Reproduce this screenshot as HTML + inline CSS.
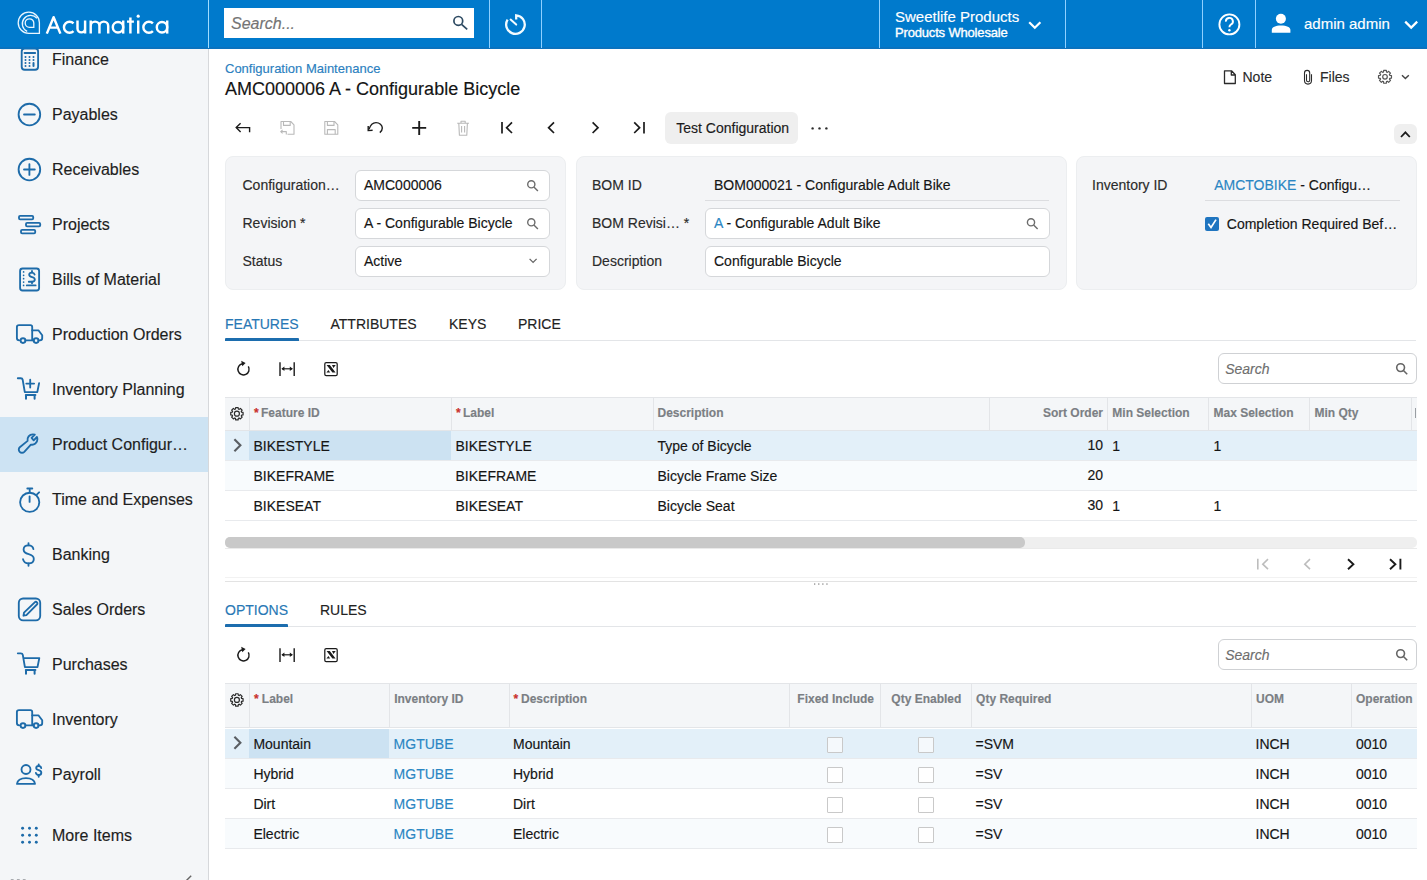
<!DOCTYPE html>
<html><head><meta charset="utf-8"><title>Configuration Maintenance</title><style>
*{box-sizing:border-box}
html,body{margin:0;padding:0}
body{-webkit-text-stroke:0.15px currentColor;width:1427px;height:880px;overflow:hidden;position:relative;background:#fff;font-family:"Liberation Sans",sans-serif;color:#1b1b1b}
.a{position:absolute}
.t{position:absolute;white-space:nowrap;line-height:1}
svg.ov{position:absolute;left:0;top:0;width:1427px;height:880px;overflow:visible}
</style></head><body>
<div class="a" style="left:0px;top:0px;width:1427px;height:49px;background:#007acc"></div>
<div class="a" style="left:0px;top:47px;width:1427px;height:2px;background:#0a72be"></div>
<div class="a" style="left:208px;top:0px;width:1px;height:48px;background:#9fdcff"></div>
<div class="a" style="left:489px;top:0px;width:1px;height:48px;background:#8fd0ff"></div>
<div class="a" style="left:541px;top:0px;width:1px;height:48px;background:#8fd0ff"></div>
<div class="a" style="left:879px;top:0px;width:1px;height:48px;background:#8fd0ff"></div>
<div class="a" style="left:1065px;top:0px;width:1px;height:48px;background:#8fd0ff"></div>
<div class="a" style="left:1202px;top:0px;width:1px;height:48px;background:#8fd0ff"></div>
<div class="a" style="left:1255px;top:0px;width:1px;height:48px;background:#8fd0ff"></div>
<div class="a" style="left:224px;top:8px;width:250px;height:30px;background:#fff"></div>
<div class="t" style="left:231px;top:15.76px;font-size:16px;color:#747474;font-weight:400;font-style:italic;">Search...</div>
<div class="t" style="left:895px;top:8.90px;font-size:15px;color:#fff;font-weight:400;">Sweetlife Products</div>
<div class="t" style="left:895px;top:25.60px;font-size:13px;color:#fff;font-weight:400;letter-spacing:-0.17px;-webkit-text-stroke:0.35px #fff">Products Wholesale</div>
<div class="t" style="left:1304px;top:15.90px;font-size:15px;color:#fff;font-weight:400;">admin admin</div>
<div class="a" style="left:0px;top:49px;width:208px;height:831px;background:#f4f6f8"></div>
<div class="a" style="left:208px;top:49px;width:1px;height:831px;background:#d6d8db"></div>
<div class="a" style="left:0px;top:417px;width:208px;height:55px;background:#cde3f3"></div>
<div class="t" style="left:52px;top:51.76px;font-size:16px;color:#1e1e1e;font-weight:400;">Finance</div>
<div class="t" style="left:52px;top:106.76px;font-size:16px;color:#1e1e1e;font-weight:400;">Payables</div>
<div class="t" style="left:52px;top:161.76px;font-size:16px;color:#1e1e1e;font-weight:400;">Receivables</div>
<div class="t" style="left:52px;top:216.76px;font-size:16px;color:#1e1e1e;font-weight:400;">Projects</div>
<div class="t" style="left:52px;top:271.76px;font-size:16px;color:#1e1e1e;font-weight:400;">Bills of Material</div>
<div class="t" style="left:52px;top:326.76px;font-size:16px;color:#1e1e1e;font-weight:400;">Production Orders</div>
<div class="t" style="left:52px;top:381.76px;font-size:16px;color:#1e1e1e;font-weight:400;">Inventory Planning</div>
<div class="t" style="left:52px;top:436.76px;font-size:16px;color:#1e1e1e;font-weight:400;">Product Configur…</div>
<div class="t" style="left:52px;top:491.76px;font-size:16px;color:#1e1e1e;font-weight:400;">Time and Expenses</div>
<div class="t" style="left:52px;top:546.76px;font-size:16px;color:#1e1e1e;font-weight:400;">Banking</div>
<div class="t" style="left:52px;top:601.76px;font-size:16px;color:#1e1e1e;font-weight:400;">Sales Orders</div>
<div class="t" style="left:52px;top:656.76px;font-size:16px;color:#1e1e1e;font-weight:400;">Purchases</div>
<div class="t" style="left:52px;top:711.76px;font-size:16px;color:#1e1e1e;font-weight:400;">Inventory</div>
<div class="t" style="left:52px;top:766.76px;font-size:16px;color:#1e1e1e;font-weight:400;">Payroll</div>
<div class="t" style="left:52px;top:827.76px;font-size:16px;color:#1e1e1e;font-weight:400;">More Items</div>
<div class="t" style="left:225px;top:61.60px;font-size:13px;color:#2b80c0;font-weight:400;">Configuration Maintenance</div>
<div class="t" style="left:225px;top:79.56px;font-size:18px;color:#141414;font-weight:400;">AMC000006 A - Configurable Bicycle</div>
<div class="t" style="left:1242.5px;top:69.85px;font-size:14px;color:#2b2b2b;font-weight:400;">Note</div>
<div class="t" style="left:1320px;top:69.85px;font-size:14px;color:#2b2b2b;font-weight:400;">Files</div>
<div class="a" style="left:665px;top:112px;width:133px;height:32px;background:#efefef;border-radius:6px"></div>
<div class="t" style="left:676.3px;top:120.75px;font-size:14px;color:#1b1b1b;font-weight:400;">Test Configuration</div>
<div class="a" style="left:1394px;top:124px;width:23px;height:20px;background:#efefef;border-radius:6px"></div>
<div class="a" style="left:225px;top:156px;width:341px;height:134px;background:#f4f5f7;border:1px solid #eceef0;border-radius:8px"></div>
<div class="a" style="left:575.5px;top:156px;width:491px;height:134px;background:#f4f5f7;border:1px solid #eceef0;border-radius:8px"></div>
<div class="a" style="left:1075.5px;top:156px;width:341px;height:134px;background:#f4f5f7;border:1px solid #eceef0;border-radius:8px"></div>
<div class="t" style="left:242.5px;top:177.95px;font-size:14px;color:#2b2b2b;font-weight:400;">Configuration…</div>
<div class="t" style="left:242.5px;top:215.95px;font-size:14px;color:#2b2b2b;font-weight:400;">Revision *</div>
<div class="t" style="left:242.5px;top:253.95px;font-size:14px;color:#2b2b2b;font-weight:400;">Status</div>
<div class="a" style="left:355px;top:169.5px;width:194.5px;height:31px;background:#fff;border:1px solid #d5d7da;border-radius:6px"></div>
<div class="a" style="left:355px;top:207.5px;width:194.5px;height:31px;background:#fff;border:1px solid #d5d7da;border-radius:6px"></div>
<div class="a" style="left:355px;top:245.5px;width:194.5px;height:31px;background:#fff;border:1px solid #d5d7da;border-radius:6px"></div>
<div class="t" style="left:364px;top:177.95px;font-size:14px;color:#151515;font-weight:400;">AMC000006</div>
<div class="t" style="left:364px;top:215.95px;font-size:14px;color:#151515;font-weight:400;">A - Configurable Bicycle</div>
<div class="t" style="left:364px;top:253.95px;font-size:14px;color:#151515;font-weight:400;">Active</div>
<div class="t" style="left:592px;top:177.95px;font-size:14px;color:#2b2b2b;font-weight:400;">BOM ID</div>
<div class="t" style="left:592px;top:215.95px;font-size:14px;color:#2b2b2b;font-weight:400;">BOM Revisi… *</div>
<div class="t" style="left:592px;top:253.95px;font-size:14px;color:#2b2b2b;font-weight:400;">Description</div>
<div class="t" style="left:714px;top:177.95px;font-size:14px;color:#151515;font-weight:400;">BOM000021 - Configurable Adult Bike</div>
<div class="a" style="left:705px;top:200px;width:344px;height:1px;background:#dcdde0"></div>
<div class="a" style="left:705px;top:207.5px;width:344.5px;height:31px;background:#fff;border:1px solid #d5d7da;border-radius:6px"></div>
<div class="a" style="left:705px;top:245.5px;width:344.5px;height:31px;background:#fff;border:1px solid #d5d7da;border-radius:6px"></div>
<div class="t" style="left:714px;top:215.95px;font-size:14px;color:#151515;font-weight:400;"><span style="color:#2a86c3">A</span> - Configurable Adult Bike</div>
<div class="t" style="left:714px;top:253.95px;font-size:14px;color:#151515;font-weight:400;">Configurable Bicycle</div>
<div class="t" style="left:1092px;top:177.95px;font-size:14px;color:#2b2b2b;font-weight:400;">Inventory ID</div>
<div class="t" style="left:1214.2px;top:177.95px;font-size:14px;color:#151515;font-weight:400;"><span style="color:#2a86c3">AMCTOBIKE</span> - Configu…</div>
<div class="a" style="left:1205px;top:200px;width:195px;height:1px;background:#dcdde0"></div>
<div class="a" style="left:1205px;top:217px;width:14px;height:14px;background:#1f75c0;border-radius:2px"></div>
<div class="t" style="left:1226.8px;top:216.85px;font-size:14px;color:#151515;font-weight:400;">Completion Required Bef…</div>
<div class="t" style="left:225px;top:317.15px;font-size:14px;color:#2878b5;font-weight:400;">FEATURES</div>
<div class="t" style="left:330.5px;top:317.15px;font-size:14px;color:#222;font-weight:400;">ATTRIBUTES</div>
<div class="t" style="left:449px;top:317.15px;font-size:14px;color:#222;font-weight:400;">KEYS</div>
<div class="t" style="left:518px;top:317.15px;font-size:14px;color:#222;font-weight:400;">PRICE</div>
<div class="a" style="left:225px;top:340px;width:1191px;height:1px;background:#e3e5e8"></div>
<div class="a" style="left:225px;top:338px;width:74px;height:3px;background:#1c6dae;border-radius:1px 1px 0 0"></div>
<div class="a" style="left:1217.5px;top:353.3px;width:199px;height:31px;background:#fff;border:1px solid #cfd1d4;border-radius:6px"></div>
<div class="t" style="left:1225.2px;top:361.75px;font-size:14px;color:#6e6e6e;font-weight:400;font-style:italic;">Search</div>
<div class="a" style="left:225px;top:397px;width:1192px;height:34px;background:#f4f6f8"></div>
<div class="a" style="left:225px;top:397px;width:1192px;height:1px;background:#e3e5e8"></div>
<div class="a" style="left:225px;top:430px;width:1192px;height:1px;background:#e3e5e8"></div>
<div class="a" style="left:249px;top:398px;width:1px;height:33px;background:#e3e5e8"></div>
<div class="a" style="left:451px;top:398px;width:1px;height:33px;background:#e3e5e8"></div>
<div class="a" style="left:653px;top:398px;width:1px;height:33px;background:#e3e5e8"></div>
<div class="a" style="left:989px;top:398px;width:1px;height:33px;background:#e3e5e8"></div>
<div class="a" style="left:1107px;top:398px;width:1px;height:33px;background:#e3e5e8"></div>
<div class="a" style="left:1208px;top:398px;width:1px;height:33px;background:#e3e5e8"></div>
<div class="a" style="left:1309px;top:398px;width:1px;height:33px;background:#e3e5e8"></div>
<div class="a" style="left:1411px;top:398px;width:1px;height:33px;background:#e3e5e8"></div>
<div class="t" style="left:254px;top:407.24px;font-size:12px;color:#c9302c;font-weight:700;">*</div>
<div class="t" style="left:261px;top:407.44px;font-size:12px;color:#7b7f84;font-weight:700;">Feature ID</div>
<div class="t" style="left:456px;top:407.24px;font-size:12px;color:#c9302c;font-weight:700;">*</div>
<div class="t" style="left:463px;top:407.44px;font-size:12px;color:#7b7f84;font-weight:700;">Label</div>
<div class="t" style="left:657.5px;top:407.44px;font-size:12px;color:#7b7f84;font-weight:700;">Description</div>
<div class="t" style="right:324px;top:407.44px;font-size:12px;color:#7b7f84;font-weight:700;">Sort Order</div>
<div class="t" style="left:1112.3px;top:407.44px;font-size:12px;color:#7b7f84;font-weight:700;">Min Selection</div>
<div class="t" style="left:1213.5px;top:407.44px;font-size:12px;color:#7b7f84;font-weight:700;">Max Selection</div>
<div class="t" style="left:1314.5px;top:407.44px;font-size:12px;color:#7b7f84;font-weight:700;">Min Qty</div>
<div class="a" style="left:1415px;top:408px;width:1.2px;height:10px;background:#9a9ea3"></div>
<div class="a" style="left:225px;top:431px;width:1192px;height:30px;background:#e3f0f9"></div>
<div class="a" style="left:249px;top:431px;width:202px;height:30px;background:#cce2f2"></div>
<div class="a" style="left:225px;top:460px;width:1192px;height:1px;background:#e8eaed"></div>
<div class="t" style="left:253.5px;top:439.15px;font-size:14px;color:#151515;font-weight:400;">BIKESTYLE</div>
<div class="t" style="left:455.5px;top:439.15px;font-size:14px;color:#151515;font-weight:400;">BIKESTYLE</div>
<div class="t" style="left:657.5px;top:439.15px;font-size:14px;color:#151515;font-weight:400;">Type of Bicycle</div>
<div class="t" style="right:324px;top:438.35px;font-size:14px;color:#151515;font-weight:400;">10</div>
<div class="t" style="left:1112.3px;top:439.15px;font-size:14px;color:#151515;font-weight:400;">1</div>
<div class="t" style="left:1213.5px;top:439.15px;font-size:14px;color:#151515;font-weight:400;">1</div>
<div class="a" style="left:225px;top:461px;width:1192px;height:30px;background:#f8fbfd"></div>
<div class="a" style="left:225px;top:490px;width:1192px;height:1px;background:#e8eaed"></div>
<div class="t" style="left:253.5px;top:469.15px;font-size:14px;color:#151515;font-weight:400;">BIKEFRAME</div>
<div class="t" style="left:455.5px;top:469.15px;font-size:14px;color:#151515;font-weight:400;">BIKEFRAME</div>
<div class="t" style="left:657.5px;top:469.15px;font-size:14px;color:#151515;font-weight:400;">Bicycle Frame Size</div>
<div class="t" style="right:324px;top:468.35px;font-size:14px;color:#151515;font-weight:400;">20</div>
<div class="t" style="left:1112.3px;top:469.15px;font-size:14px;color:#151515;font-weight:400;"></div>
<div class="t" style="left:1213.5px;top:469.15px;font-size:14px;color:#151515;font-weight:400;"></div>
<div class="a" style="left:225px;top:520px;width:1192px;height:1px;background:#e8eaed"></div>
<div class="t" style="left:253.5px;top:499.15px;font-size:14px;color:#151515;font-weight:400;">BIKESEAT</div>
<div class="t" style="left:455.5px;top:499.15px;font-size:14px;color:#151515;font-weight:400;">BIKESEAT</div>
<div class="t" style="left:657.5px;top:499.15px;font-size:14px;color:#151515;font-weight:400;">Bicycle Seat</div>
<div class="t" style="right:324px;top:498.35px;font-size:14px;color:#151515;font-weight:400;">30</div>
<div class="t" style="left:1112.3px;top:499.15px;font-size:14px;color:#151515;font-weight:400;">1</div>
<div class="t" style="left:1213.5px;top:499.15px;font-size:14px;color:#151515;font-weight:400;">1</div>
<div class="a" style="left:225px;top:537px;width:1191.5px;height:10.5px;background:#efefef;border-radius:5px"></div>
<div class="a" style="left:225px;top:537px;width:800px;height:10.5px;background:#c9c9c9;border-radius:5px"></div>
<div class="a" style="left:225px;top:547.5px;width:1191.5px;height:1px;background:#eaeaea"></div>
<div class="a" style="left:225px;top:577px;width:1191.5px;height:1px;background:#f2f2f2"></div>
<div class="a" style="left:225px;top:581px;width:1191.5px;height:1px;background:#e3e3e3"></div>
<div class="t" style="left:225px;top:603.15px;font-size:14px;color:#2878b5;font-weight:400;">OPTIONS</div>
<div class="t" style="left:320px;top:603.15px;font-size:14px;color:#222;font-weight:400;">RULES</div>
<div class="a" style="left:225px;top:626px;width:1191px;height:1px;background:#e3e5e8"></div>
<div class="a" style="left:225px;top:624px;width:63px;height:3px;background:#1c6dae;border-radius:1px 1px 0 0"></div>
<div class="a" style="left:1217.5px;top:639.3px;width:199px;height:31px;background:#fff;border:1px solid #cfd1d4;border-radius:6px"></div>
<div class="t" style="left:1225.2px;top:647.75px;font-size:14px;color:#6e6e6e;font-weight:400;font-style:italic;">Search</div>
<div class="a" style="left:225px;top:683.3px;width:1192px;height:45px;background:#f4f6f8"></div>
<div class="a" style="left:225px;top:683.3px;width:1192px;height:1px;background:#e3e5e8"></div>
<div class="a" style="left:225px;top:727.3px;width:1192px;height:1px;background:#e3e5e8"></div>
<div class="a" style="left:249px;top:684.3px;width:1px;height:44px;background:#e3e5e8"></div>
<div class="a" style="left:389px;top:684.3px;width:1px;height:44px;background:#e3e5e8"></div>
<div class="a" style="left:509px;top:684.3px;width:1px;height:44px;background:#e3e5e8"></div>
<div class="a" style="left:789px;top:684.3px;width:1px;height:44px;background:#e3e5e8"></div>
<div class="a" style="left:880px;top:684.3px;width:1px;height:44px;background:#e3e5e8"></div>
<div class="a" style="left:971px;top:684.3px;width:1px;height:44px;background:#e3e5e8"></div>
<div class="a" style="left:1251px;top:684.3px;width:1px;height:44px;background:#e3e5e8"></div>
<div class="a" style="left:1351px;top:684.3px;width:1px;height:44px;background:#e3e5e8"></div>
<div class="t" style="left:254px;top:692.84px;font-size:12px;color:#c9302c;font-weight:700;">*</div>
<div class="t" style="left:261.8px;top:693.04px;font-size:12px;color:#7b7f84;font-weight:700;">Label</div>
<div class="t" style="left:394.2px;top:693.04px;font-size:12px;color:#7b7f84;font-weight:700;">Inventory ID</div>
<div class="t" style="left:513.5px;top:692.84px;font-size:12px;color:#c9302c;font-weight:700;">*</div>
<div class="t" style="left:521px;top:693.04px;font-size:12px;color:#7b7f84;font-weight:700;">Description</div>
<div class="t" style="left:797.3px;top:693.04px;font-size:12px;color:#7b7f84;font-weight:700;">Fixed Include</div>
<div class="t" style="left:891.3px;top:693.04px;font-size:12px;color:#7b7f84;font-weight:700;">Qty Enabled</div>
<div class="t" style="left:976.1px;top:693.04px;font-size:12px;color:#7b7f84;font-weight:700;">Qty Required</div>
<div class="t" style="left:1256px;top:693.04px;font-size:12px;color:#7b7f84;font-weight:700;">UOM</div>
<div class="t" style="left:1356px;top:693.04px;font-size:12px;color:#7b7f84;font-weight:700;">Operation</div>
<div class="a" style="left:225px;top:728.5px;width:1192px;height:30px;background:#e3f0f9"></div>
<div class="a" style="left:249px;top:728.5px;width:140px;height:30px;background:#cce2f2"></div>
<div class="a" style="left:225px;top:758.0px;width:1192px;height:1px;background:#e8eaed"></div>
<div class="t" style="left:253.4px;top:737.15px;font-size:14px;color:#151515;font-weight:400;">Mountain</div>
<div class="t" style="left:393.6px;top:737.15px;font-size:14px;color:#2a86c3;font-weight:400;">MGTUBE</div>
<div class="t" style="left:513px;top:737.15px;font-size:14px;color:#151515;font-weight:400;">Mountain</div>
<div class="a" style="left:826.5px;top:736.5px;width:16px;height:16px;background:#f5f9fc;border:1px solid #c9c9c9;border-radius:1px"></div>
<div class="a" style="left:917.5px;top:736.5px;width:16px;height:16px;background:#f5f9fc;border:1px solid #c9c9c9;border-radius:1px"></div>
<div class="t" style="left:975.5px;top:737.15px;font-size:14px;color:#151515;font-weight:400;">=SVM</div>
<div class="t" style="left:1255.5px;top:737.15px;font-size:14px;color:#151515;font-weight:400;">INCH</div>
<div class="t" style="left:1356px;top:737.15px;font-size:14px;color:#151515;font-weight:400;">0010</div>
<div class="a" style="left:225px;top:758.5px;width:1192px;height:30px;background:#f8fbfd"></div>
<div class="a" style="left:225px;top:788.0px;width:1192px;height:1px;background:#e8eaed"></div>
<div class="t" style="left:253.4px;top:767.15px;font-size:14px;color:#151515;font-weight:400;">Hybrid</div>
<div class="t" style="left:393.6px;top:767.15px;font-size:14px;color:#2a86c3;font-weight:400;">MGTUBE</div>
<div class="t" style="left:513px;top:767.15px;font-size:14px;color:#151515;font-weight:400;">Hybrid</div>
<div class="a" style="left:826.5px;top:766.5px;width:16px;height:16px;background:#fff;border:1px solid #c9c9c9;border-radius:1px"></div>
<div class="a" style="left:917.5px;top:766.5px;width:16px;height:16px;background:#fff;border:1px solid #c9c9c9;border-radius:1px"></div>
<div class="t" style="left:975.5px;top:767.15px;font-size:14px;color:#151515;font-weight:400;">=SV</div>
<div class="t" style="left:1255.5px;top:767.15px;font-size:14px;color:#151515;font-weight:400;">INCH</div>
<div class="t" style="left:1356px;top:767.15px;font-size:14px;color:#151515;font-weight:400;">0010</div>
<div class="a" style="left:225px;top:818.0px;width:1192px;height:1px;background:#e8eaed"></div>
<div class="t" style="left:253.4px;top:797.15px;font-size:14px;color:#151515;font-weight:400;">Dirt</div>
<div class="t" style="left:393.6px;top:797.15px;font-size:14px;color:#2a86c3;font-weight:400;">MGTUBE</div>
<div class="t" style="left:513px;top:797.15px;font-size:14px;color:#151515;font-weight:400;">Dirt</div>
<div class="a" style="left:826.5px;top:796.5px;width:16px;height:16px;background:#fff;border:1px solid #c9c9c9;border-radius:1px"></div>
<div class="a" style="left:917.5px;top:796.5px;width:16px;height:16px;background:#fff;border:1px solid #c9c9c9;border-radius:1px"></div>
<div class="t" style="left:975.5px;top:797.15px;font-size:14px;color:#151515;font-weight:400;">=SV</div>
<div class="t" style="left:1255.5px;top:797.15px;font-size:14px;color:#151515;font-weight:400;">INCH</div>
<div class="t" style="left:1356px;top:797.15px;font-size:14px;color:#151515;font-weight:400;">0010</div>
<div class="a" style="left:225px;top:818.5px;width:1192px;height:30px;background:#f8fbfd"></div>
<div class="a" style="left:225px;top:848.0px;width:1192px;height:1px;background:#e8eaed"></div>
<div class="t" style="left:253.4px;top:827.15px;font-size:14px;color:#151515;font-weight:400;">Electric</div>
<div class="t" style="left:393.6px;top:827.15px;font-size:14px;color:#2a86c3;font-weight:400;">MGTUBE</div>
<div class="t" style="left:513px;top:827.15px;font-size:14px;color:#151515;font-weight:400;">Electric</div>
<div class="a" style="left:826.5px;top:826.5px;width:16px;height:16px;background:#fff;border:1px solid #c9c9c9;border-radius:1px"></div>
<div class="a" style="left:917.5px;top:826.5px;width:16px;height:16px;background:#fff;border:1px solid #c9c9c9;border-radius:1px"></div>
<div class="t" style="left:975.5px;top:827.15px;font-size:14px;color:#151515;font-weight:400;">=SV</div>
<div class="t" style="left:1255.5px;top:827.15px;font-size:14px;color:#151515;font-weight:400;">INCH</div>
<div class="t" style="left:1356px;top:827.15px;font-size:14px;color:#151515;font-weight:400;">0010</div>
<svg class="ov" width="1427" height="880" viewBox="0 0 1427 880">
<defs><clipPath id="cb"><rect x="-10" y="9.5" width="208" height="60"/></clipPath></defs>
<g fill="none" stroke="#eaf6ff" stroke-width="1.3" stroke-linejoin="miter"><path d="M28.8 33.4 A10.6 10.6 0 1 1 39.4 22.75 L39.4 33.4 Z"/><path d="M37 18.2 A8.4 8.4 0 1 0 27.2 31.4"/><path d="M29.5 27.4 A4.3 4.3 0 1 1 33.8 23.1 L33.8 27.4 Z"/></g>
<g fill="none" stroke="#fff" stroke-width="2.45" stroke-linecap="butt" stroke-linejoin="round"><path d="M46.8 33.6 L53.6 17.2 L60.4 33.6 M49.4 27.6 L57.8 27.6"/><path d="M73.5 23.4 A5.55 5.55 0 1 0 73.5 31.1"/><path d="M77.5 20.5 L77.5 28.6 A3.8 3.8 0 0 0 85.1 28.6 L85.1 20.5 M85.1 28 L85.1 33.6"/><path d="M90.7 33.6 L90.7 20.5 M90.7 26 A4.375 4.375 0 0 1 99.45 26 L99.45 33.6 M99.45 26 A4.375 4.375 0 0 1 108.2 26 L108.2 33.6"/><circle cx="118" cy="27.3" r="5.2"/><path d="M123.2 20.5 L123.2 33.6"/><path d="M130.4 17.4 L130.4 33.6 M127 21.6 L133.9 21.6"/><path d="M138.2 20.5 L138.2 33.6"/><path d="M152.9 23.4 A5.55 5.55 0 1 0 152.9 31.1"/><circle cx="162" cy="27.3" r="5.2"/><path d="M167.2 20.5 L167.2 33.6"/></g><circle cx="138.2" cy="16.2" r="1.6" fill="#fff"/>
<g fill="none" stroke="#2d4a62" stroke-width="1.7"><circle cx="458.3" cy="20.9" r="4.4"/><path d="M461.6 24.3 L467.2 29.4"/></g>
<g fill="none" stroke="#f2fbff" stroke-width="2.3" stroke-linecap="butt" stroke-linejoin="miter"><path d="M507.6 19.6 A9.3 9.3 0 1 0 516.2 15.3 L516.2 19.4"/><path d="M510.6 19.6 L516.2 24.6" stroke-width="2" stroke-linecap="round"/></g>
<path d="M1029.2 22.2 L1034.8 27.8 L1040.4 22.2" fill="none" stroke="#fff" stroke-width="2.2"/>
<g fill="none" stroke="#fff" stroke-width="1.9"><circle cx="1229.4" cy="24.4" r="10"/><path d="M1225.9 21.6 A3.5 3.5 0 1 1 1230.8 24.6 C1229.6 25.3 1229.4 26 1229.4 27.3"/></g><circle cx="1229.4" cy="30.2" r="1.2" fill="#fff"/>
<g fill="#fff"><circle cx="1280.9" cy="18.8" r="5"/><path d="M1271.8 32.8 L1271.8 30 C1271.8 27.2 1275.5 25.6 1281 25.6 C1286.6 25.6 1290.4 27.2 1290.4 30 L1290.4 32.8 Z"/></g>
<path d="M1405.2 21.6 L1411.2 27.6 L1417.2 21.6" fill="none" stroke="#fff" stroke-width="2.2"/>
<g clip-path="url(#cb)" transform="translate(10 39.5)" fill="none" stroke="#1d6ba9" stroke-width="1.85" stroke-linecap="round" stroke-linejoin="round"><rect x="11.7" y="9" width="16.4" height="21.2" rx="3"/><path d="M14.5 13.5 L25.2 13.5" stroke-width="1.8"/><g fill="#1d6ba9" stroke="none"><circle cx="15.5" cy="17.5" r="1"/><circle cx="19.5" cy="17.5" r="1"/><circle cx="23.5" cy="17.5" r="1"/><circle cx="15.5" cy="20.5" r="1"/><circle cx="19.5" cy="20.5" r="1"/><circle cx="23.5" cy="20.5" r="1"/><circle cx="15.5" cy="23.5" r="1"/><circle cx="19.5" cy="23.5" r="1"/><circle cx="15.5" cy="26.5" r="1"/><circle cx="19.5" cy="26.5" r="1"/><rect x="22.5" y="22.5" width="2" height="5" rx="1"/></g></g>
<g transform="translate(10 94.5)" fill="none" stroke="#1d6ba9" stroke-width="1.85" stroke-linecap="round" stroke-linejoin="round"><circle cx="19.4" cy="20" r="10.8"/><path d="M14 20 L24.8 20"/></g>
<g transform="translate(10 149.5)" fill="none" stroke="#1d6ba9" stroke-width="1.85" stroke-linecap="round" stroke-linejoin="round"><circle cx="19.4" cy="20" r="10.8"/><path d="M14 20 L24.8 20 M19.4 14.6 L19.4 25.4"/></g>
<g transform="translate(10 204.5)" fill="none" stroke="#1d6ba9" stroke-width="1.85" stroke-linecap="round" stroke-linejoin="round"><rect x="9" y="11.3" width="14.2" height="3.6" rx="1.1"/><rect x="16" y="18.3" width="14.2" height="3.6" rx="1.1"/><rect x="11" y="25.3" width="14.2" height="3.6" rx="1.1"/></g>
<g transform="translate(10 259.5)" fill="none" stroke="#1d6ba9" stroke-width="1.85" stroke-linecap="round" stroke-linejoin="round"><rect x="10.1" y="9" width="19" height="22" rx="2.5"/><g fill="#1d6ba9" stroke="none"><circle cx="13.6" cy="12.4" r="0.85"/><circle cx="13.6" cy="15.8" r="0.85"/><circle cx="13.6" cy="19.2" r="0.85"/><circle cx="13.6" cy="22.6" r="0.85"/><circle cx="13.6" cy="25.9" r="0.85"/></g><path d="M24.6 15 C24.2 13.6 23.4 13.1 22 13.1 C20.2 13.1 19.2 14 19.2 15.3 C19.2 16.7 20.4 17.2 22.1 17.6 C23.9 18 24.8 18.6 24.8 20 C24.8 21.4 23.7 22.2 22 22.2 L18.8 22.2"/><path d="M22 11.5 L22 13.1 M22 22.2 L22 23.8"/><path d="M16.8 25.9 L25.6 25.9"/></g>
<g transform="translate(10 314.5)" fill="none" stroke="#1d6ba9" stroke-width="1.85" stroke-linecap="round" stroke-linejoin="round"><path d="M9.3 25.8 C7.5 25.8 6.9 25 6.9 23.5 L6.9 12.5 C6.9 11.2 7.6 10.6 9 10.6 L20.4 10.6 C21.6 10.6 22.2 11.3 22.2 12.5 L22.2 25.8"/><path d="M22.2 15.8 L28.4 15.8 L32.2 20.8 L32.2 23.8 C32.2 25.2 31.6 25.8 30 25.8 L28.4 25.8"/><path d="M15.4 25.8 L23.8 25.8"/><circle cx="13" cy="26.1" r="2.4"/><circle cx="26.1" cy="26.1" r="2.4"/></g>
<g transform="translate(10 369.5)" fill="none" stroke="#1d6ba9" stroke-width="1.85" stroke-linecap="round" stroke-linejoin="round"><path d="M7.8 8.7 L10.8 8.7 C11.8 8.7 12.5 9.3 12.7 10.3 L14.8 22.6 L27.3 22.6 L29.1 13.6"/><path d="M15.8 25.6 L25.4 25.6 M16 25.6 L16 29.2 M24.6 25.6 L24.6 29.2" stroke-width="2"/><path d="M16.3 14.1 L24.1 14.1 M20.2 10.2 L20.2 18"/></g>
<g transform="translate(10 424.5)" fill="none" stroke="#1d6ba9" stroke-width="1.85" stroke-linecap="round" stroke-linejoin="round"><path d="M17.6 16.4 C16.9 13.2 19.3 9.8 22.8 9.8 C23.5 9.8 24.2 9.9 24.8 10.2 L21.6 13.4 L23.7 15.8 L26.9 12.5 C27.3 13.2 27.4 14 27.4 14.7 C27.4 18.3 24.2 20.8 20.9 20.1 L14.3 27.3 C13 28.6 11 28.6 9.7 27.3 C8.4 26 8.5 24 9.8 22.8 Z"/></g>
<g transform="translate(10 479.5)" fill="none" stroke="#1d6ba9" stroke-width="1.85" stroke-linecap="round" stroke-linejoin="round"><circle cx="19.7" cy="22.8" r="9.6"/><path d="M19.6 16.8 L19.6 22.4 M19.7 10.5 L19.7 13 M17.3 9 L22.3 9 M27 14.8 L29.1 12.8"/></g>
<g transform="translate(10 534.5)" fill="none" stroke="#1d6ba9" stroke-width="1.85" stroke-linecap="round" stroke-linejoin="round"><path d="M23.4 14.6 C23 12.2 21.3 10.8 18.6 10.8 C15.4 10.8 13.6 12.5 13.6 15 C13.6 17.8 15.8 18.9 18.7 19.6 C21.9 20.4 23.8 21.5 23.8 24.4 C23.8 27.3 21.6 28.9 18.5 28.9 C15.5 28.9 13.6 27.3 13 24.6"/><path d="M18.5 8.6 L18.5 10.8 M18.5 28.9 L18.5 31.2"/></g>
<g transform="translate(10 589.5)" fill="none" stroke="#1d6ba9" stroke-width="1.85" stroke-linecap="round" stroke-linejoin="round"><rect x="8.8" y="9" width="21.4" height="21.8" rx="4.3"/><path d="M13.5 26.2 L14 23.1 L24.7 12.8 C25.4 12.1 26.4 12.1 27 12.8 C27.6 13.4 27.6 14.4 26.9 15 L16.4 25.6 Z"/></g>
<g transform="translate(10 644.5)" fill="none" stroke="#1d6ba9" stroke-width="1.85" stroke-linecap="round" stroke-linejoin="round"><path d="M7.8 8.8 L10.8 8.8 C11.8 8.8 12.6 9.4 12.8 10.4 L14.9 22.6 L27.5 22.6 L29.3 13.6 L13.6 13.6"/><path d="M15.8 25.6 L25.4 25.6 M16 25.6 L16 29.2 M24.6 25.6 L24.6 29.2" stroke-width="2"/></g>
<g transform="translate(10 699.5)" fill="none" stroke="#1d6ba9" stroke-width="1.85" stroke-linecap="round" stroke-linejoin="round"><path d="M9.3 25.8 C7.5 25.8 6.9 25 6.9 23.5 L6.9 12.5 C6.9 11.2 7.6 10.6 9 10.6 L20.4 10.6 C21.6 10.6 22.2 11.3 22.2 12.5 L22.2 25.8"/><path d="M22.2 15.8 L28.4 15.8 L32.2 20.8 L32.2 23.8 C32.2 25.2 31.6 25.8 30 25.8 L28.4 25.8"/><path d="M15.4 25.8 L23.8 25.8"/><circle cx="13" cy="26.1" r="2.4"/><circle cx="26.1" cy="26.1" r="2.4"/></g>
<g transform="translate(10 754.5)" fill="none" stroke="#1d6ba9" stroke-width="1.85" stroke-linecap="round" stroke-linejoin="round"><circle cx="16" cy="15" r="4.5"/><path d="M7 29.4 C7.5 25.6 11 23.6 16 23.6 C21 23.6 24.5 25.6 25 29.4 Z"/><g transform="translate(0 1.2)"><path d="M31.2 12.4 C30.9 11 30 10.3 28.7 10.3 C27.2 10.3 26.2 11.1 26.2 12.3 C26.2 13.6 27.2 14.1 28.7 14.5 C30.3 14.9 31.3 15.5 31.3 17 C31.3 18.4 30.2 19.3 28.6 19.3 C27.2 19.3 26.2 18.6 25.9 17.2"/><path d="M28.7 8.6 L28.7 10.3 M28.7 19.3 L28.7 21"/></g></g>
<g fill="#1d6ba9"><circle cx="22.6" cy="828.2" r="1.45"/><circle cx="22.6" cy="835.2" r="1.45"/><circle cx="22.6" cy="842.2" r="1.45"/><circle cx="29.5" cy="828.2" r="1.45"/><circle cx="29.5" cy="835.2" r="1.45"/><circle cx="29.5" cy="842.2" r="1.45"/><circle cx="36.3" cy="828.2" r="1.45"/><circle cx="36.3" cy="835.2" r="1.45"/><circle cx="36.3" cy="842.2" r="1.45"/></g>
<g fill="#a9acb0"><rect x="10.8" y="879" width="2.8" height="1"/><rect x="16.9" y="879" width="2.8" height="1"/><rect x="22.8" y="879" width="2.8" height="1"/></g><path d="M186.4 880.5 L191.2 875.8" fill="none" stroke="#666" stroke-width="1.4"/>
<g fill="none" stroke="#2b2b2b" stroke-width="1.3" stroke-linejoin="round"><path d="M1224.5 70.8 L1231.5 70.8 L1235.3 74.8 L1235.3 83.5 L1224.5 83.5 Z M1231.3 70.8 L1231.3 75 L1235.3 75"/></g>
<path d="M1311.5 74.3 L1311.5 80.6 A3.5 3.5 0 0 1 1304.5 80.6 L1304.5 73 A2.6 2.6 0 0 1 1309.7 73 L1309.7 80.2 A1.6 1.6 0 0 1 1306.5 80.2 L1306.5 74.3" fill="none" stroke="#2b2b2b" stroke-width="1.1"/>
<g fill="none" stroke="#555" stroke-width="1.2" stroke-linejoin="round"><path d="M1389.78 75.32 L1391.47 75.49 L1391.47 78.11 L1389.78 78.28 L1389.42 79.13 L1390.50 80.45 L1388.65 82.30 L1387.33 81.22 L1386.48 81.58 L1386.31 83.27 L1383.69 83.27 L1383.52 81.58 L1382.67 81.22 L1381.35 82.30 L1379.50 80.45 L1380.58 79.13 L1380.22 78.28 L1378.53 78.11 L1378.53 75.49 L1380.22 75.32 L1380.58 74.47 L1379.50 73.15 L1381.35 71.30 L1382.67 72.38 L1383.52 72.02 L1383.69 70.33 L1386.31 70.33 L1386.48 72.02 L1387.33 72.38 L1388.65 71.30 L1390.50 73.15 L1389.42 74.47Z"/><circle cx="1385" cy="76.8" r="2.3"/></g>
<path d="M1402 75.2 L1405.4 78.6 L1408.8 75.2" fill="none" stroke="#444" stroke-width="1.4"/>
<g fill="none" stroke="#1b1b1b" stroke-width="1.7" stroke-linecap="butt" stroke-linejoin="miter"><path d="M236.4 127.6 L249.6 127.6 L249.6 132.2" stroke-width="1.4"/><path d="M240.6 123.2 L236.2 127.6 L240.6 132" stroke-width="1.4"/><path d="M369 129.4 C370.5 124.5 373 122.6 376 122.6 C379.5 122.6 382.3 125 382.3 128 C382.3 130 381.3 131.5 379.8 132.6" stroke-width="1.4"/><path d="M368.2 126 L368.2 130.6 L372.6 130.2" stroke-width="1.4"/><path d="M412.2 127.9 L426.2 127.9 M419.2 120.9 L419.2 134.9" stroke-width="1.9"/><path d="M502 122 L502 133.4 M512 122.4 L506.6 127.7 L512 133"/><path d="M554 122.4 L548.6 127.7 L554 133"/><path d="M592.6 122.4 L598 127.7 L592.6 133"/><path d="M634.2 122.4 L639.6 127.7 L634.2 133 M644 122 L644 133.4"/></g>
<g fill="none" stroke="#b9b9b9" stroke-width="1.1" stroke-linejoin="round"><path d="M281 129 L281 121.5 L290.7 121.5 L294 124.8 L294 134.3 L287.5 134.3"/><path d="M283.5 121.5 L283.5 125.4 L290.2 125.4 L290.2 121.5"/><path d="M280.8 131.6 L286.3 131.6 L286.3 134.5"/><path d="M282.6 129.8 L280.8 131.6 L282.6 133.4"/><path d="M324.8 121.5 L334.5 121.5 L337.8 124.8 L337.8 134.3 L324.8 134.3 Z"/><path d="M327.4 121.5 L327.4 125.4 L334 125.4 L334 121.5"/><path d="M327.4 134.3 L327.4 129.6 L335.2 129.6 L335.2 134.3"/><path d="M457.2 123.2 L469 123.2 M461 123.2 L461 121.3 L465.2 121.3 L465.2 123.2 M458.8 123.2 L459.4 135.2 L466.8 135.2 L467.4 123.2 M461.6 126 L461.6 132.4 M464.6 126 L464.6 132.4"/></g>
<g fill="#2b2b2b"><circle cx="812.6" cy="128.4" r="1.2"/><circle cx="819.5" cy="128.4" r="1.2"/><circle cx="826.4" cy="128.4" r="1.2"/></g>
<path d="M1401 137 L1405.4 132.4 L1409.8 137" fill="none" stroke="#1b1b1b" stroke-width="1.8"/>
<g fill="none" stroke="#6c6c6c" stroke-width="1.4"><circle cx="531.3" cy="184.3" r="3.6"/><path d="M533.90 186.90 L537.90 190.90"/></g>
<g fill="none" stroke="#6c6c6c" stroke-width="1.4"><circle cx="531.3" cy="222.3" r="3.6"/><path d="M533.90 224.90 L537.90 228.90"/></g>
<path d="M529.6 258.9 L533.1 262.4 L536.6 258.9" fill="none" stroke="#666" stroke-width="1.3"/>
<g fill="none" stroke="#6c6c6c" stroke-width="1.4"><circle cx="1031" cy="222.3" r="3.6"/><path d="M1033.60 224.90 L1037.60 228.90"/></g>
<path d="M1208.3 223.8 L1211 227.4 L1216 219.6" fill="none" stroke="#fff" stroke-width="1.7"/>
<g fill="none" stroke="#1b1b1b" stroke-width="1.45"><path d="M248.3 366.40000000000003 A5.6 5.6 0 1 1 242.4 363.8"/><path d="M280 362.3 L280 375.90000000000003 M294.2 362.3 L294.2 375.90000000000003" stroke-width="1.4"/><path d="M282 368.8 L292.2 368.8" stroke-width="1.2"/><rect x="324.8" y="362.6" width="12.4" height="13" rx="1.4" stroke-width="1.25"/></g><path d="M241.2 360.8 L245.6 363.1 L242.3 366.2 Z" fill="#1b1b1b"/><path d="M281.4 368.8 L284.4 366.5 L284.4 371.1 Z M292.8 368.8 L289.8 366.5 L289.8 371.1 Z" fill="#1b1b1b"/><path d="M326.6 365.0 L329.8 365.0 L335.6 372.6 L332.4 372.6 Z M332 365.0 L335.8 365.0 L333.4 367.90000000000003 Z M326.4 372.6 L330.2 372.6 L328.4 369.90000000000003 Z" fill="#1b1b1b"/>
<g fill="none" stroke="#666" stroke-width="1.6"><circle cx="1400.6" cy="367.6" r="3.9"/><path d="M1403.20 370.20 L1407.20 374.20"/></g>
<g fill="none" stroke="#2b2b2b" stroke-width="1.2" stroke-linejoin="round"><path d="M241.58 412.25 L243.07 412.45 L243.07 414.95 L241.58 415.15 L241.23 415.99 L242.15 417.18 L240.38 418.95 L239.19 418.03 L238.35 418.38 L238.15 419.87 L235.65 419.87 L235.45 418.38 L234.61 418.03 L233.42 418.95 L231.65 417.18 L232.57 415.99 L232.22 415.15 L230.73 414.95 L230.73 412.45 L232.22 412.25 L232.57 411.41 L231.65 410.22 L233.42 408.45 L234.61 409.37 L235.45 409.02 L235.65 407.53 L238.15 407.53 L238.35 409.02 L239.19 409.37 L240.38 408.45 L242.15 410.22 L241.23 411.41Z"/><circle cx="236.9" cy="413.7" r="2.5"/></g>
<path d="M234.4 439.3 L240.4 445.3 L234.4 451.3" fill="none" stroke="#5a5e63" stroke-width="2.1"/>
<g fill="none" stroke="#bdbdbd" stroke-width="1.6"><path d="M1257.8 558.8 L1257.8 569.6 M1268 559.2 L1262.8 564.2 L1268 569.2 M1310 559.2 L1304.8 564.2 L1310 569.2"/></g><g fill="none" stroke="#1b1b1b" stroke-width="1.9"><path d="M1348 559.2 L1353.4 564.2 L1348 569.2 M1390 559.2 L1395.4 564.2 L1390 569.2 M1400.4 558.8 L1400.4 569.6"/></g>
<g fill="#8a8a8a"><rect x="814.0" y="583.4" width="1.3" height="1.3"/><rect x="818.1" y="583.4" width="1.3" height="1.3"/><rect x="822.1999999999999" y="583.4" width="1.3" height="1.3"/><rect x="826.3" y="583.4" width="1.3" height="1.3"/></g>
<g fill="none" stroke="#1b1b1b" stroke-width="1.45"><path d="M248.3 652.4 A5.6 5.6 0 1 1 242.4 649.8"/><path d="M280 648.3 L280 661.9 M294.2 648.3 L294.2 661.9" stroke-width="1.4"/><path d="M282 654.8 L292.2 654.8" stroke-width="1.2"/><rect x="324.8" y="648.5999999999999" width="12.4" height="13" rx="1.4" stroke-width="1.25"/></g><path d="M241.2 646.8 L245.6 649.0999999999999 L242.3 652.1999999999999 Z" fill="#1b1b1b"/><path d="M281.4 654.8 L284.4 652.5 L284.4 657.0999999999999 Z M292.8 654.8 L289.8 652.5 L289.8 657.0999999999999 Z" fill="#1b1b1b"/><path d="M326.6 651.0 L329.8 651.0 L335.6 658.5999999999999 L332.4 658.5999999999999 Z M332 651.0 L335.8 651.0 L333.4 653.9 Z M326.4 658.5999999999999 L330.2 658.5999999999999 L328.4 655.9 Z" fill="#1b1b1b"/>
<g fill="none" stroke="#666" stroke-width="1.6"><circle cx="1400.6" cy="653.5999999999999" r="3.9"/><path d="M1403.20 656.20 L1407.20 660.20"/></g>
<g fill="none" stroke="#2b2b2b" stroke-width="1.2" stroke-linejoin="round"><path d="M241.58 698.45 L243.07 698.65 L243.07 701.15 L241.58 701.35 L241.23 702.19 L242.15 703.38 L240.38 705.15 L239.19 704.23 L238.35 704.58 L238.15 706.07 L235.65 706.07 L235.45 704.58 L234.61 704.23 L233.42 705.15 L231.65 703.38 L232.57 702.19 L232.22 701.35 L230.73 701.15 L230.73 698.65 L232.22 698.45 L232.57 697.61 L231.65 696.42 L233.42 694.65 L234.61 695.57 L235.45 695.22 L235.65 693.73 L238.15 693.73 L238.35 695.22 L239.19 695.57 L240.38 694.65 L242.15 696.42 L241.23 697.61Z"/><circle cx="236.9" cy="699.9" r="2.5"/></g>
<path d="M234.4 736.8 L240.4 742.8 L234.4 748.8" fill="none" stroke="#5a5e63" stroke-width="2.1"/>
</svg>
</body></html>
